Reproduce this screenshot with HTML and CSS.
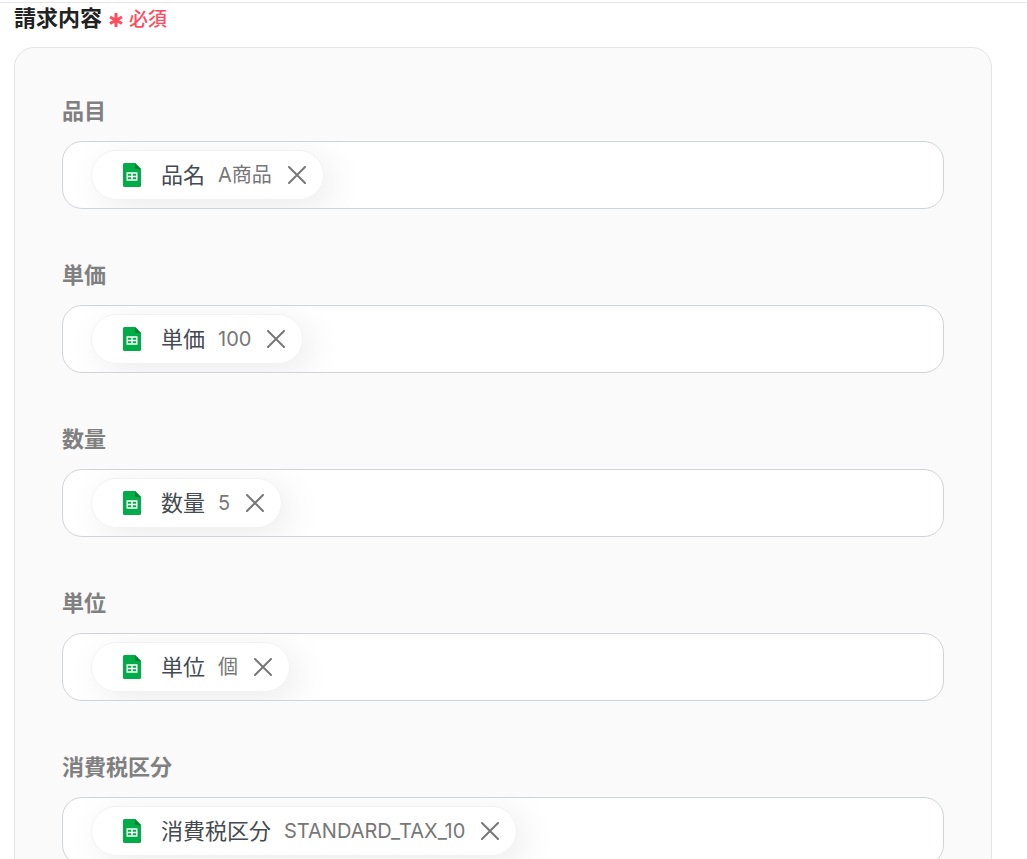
FILE: index.html
```
<!DOCTYPE html>
<html lang="ja">
<head>
    <meta charset="UTF-8">
    <meta name="viewport" content="width=device-width, initial-scale=1.0">
    <title>請求内容</title>
    <link rel="stylesheet" href="styles.css">
</head>
<body>

    <!-- Shared icons -->
    <svg class="sprite" aria-hidden="true">
        <symbol id="icon-sheet" viewBox="0 0 18 24">
            <path fill="#00ac47" d="M1.5 0H12l6 6v16.5a1.5 1.5 0 0 1-1.5 1.5h-15A1.5 1.5 0 0 1 0 22.5v-21A1.5 1.5 0 0 1 1.5 0z"/>
            <path fill="#00832d" d="M12 0l6 6h-4.5A1.5 1.5 0 0 1 12 4.5z"/>
            <path fill="#fff" fill-rule="evenodd" d="M3.5 9.3h11v8.4h-11zM4.9 10.7v2h3.4v-2zM9.700 10.7v2h3.400v-2zM4.900 14.200v2h3.400v-2zM9.700 14.200v2h3.400v-2z"/>
        </symbol>
        <symbol id="icon-close" viewBox="0 0 18 18">
            <path fill="none" stroke="currentColor" stroke-width="2" stroke-linecap="round" d="M1 1l16 16M17 1L1 17"/>
        </symbol>
    </svg>

    <main class="section">
        <div class="section-header">
            <h2>請求内容</h2>
            <span class="required">
                <svg viewBox="0 0 14 14" aria-hidden="true">
                    <path fill="none" stroke="currentColor" stroke-width="3" d="M7 0v14M1 4l12 6.500M13 4L1 10.500"/>
                </svg>
                必須
            </span>
        </div>

        <form class="panel">
            <div class="field">
                <label for="item">品目</label>
                <div class="input-box">
                    <span class="chip">
                        <svg class="chip-icon"><use href="#icon-sheet"/></svg>
                        <span class="chip-name">品名</span>
                        <span class="chip-value">A商品</span>
                        <button type="button" aria-label="削除"><svg><use href="#icon-close"/></svg></button>
                    </span>
                    <input type="text" id="item" name="item">
                </div>
            </div>

            <div class="field">
                <label for="price">単価</label>
                <div class="input-box">
                    <span class="chip">
                        <svg class="chip-icon"><use href="#icon-sheet"/></svg>
                        <span class="chip-name">単価</span>
                        <span class="chip-value">100</span>
                        <button type="button" aria-label="削除"><svg><use href="#icon-close"/></svg></button>
                    </span>
                    <input type="text" id="price" name="price">
                </div>
            </div>

            <div class="field">
                <label for="quantity">数量</label>
                <div class="input-box">
                    <span class="chip">
                        <svg class="chip-icon"><use href="#icon-sheet"/></svg>
                        <span class="chip-name">数量</span>
                        <span class="chip-value">5</span>
                        <button type="button" aria-label="削除"><svg><use href="#icon-close"/></svg></button>
                    </span>
                    <input type="text" id="quantity" name="quantity">
                </div>
            </div>

            <div class="field">
                <label for="unit">単位</label>
                <div class="input-box">
                    <span class="chip">
                        <svg class="chip-icon"><use href="#icon-sheet"/></svg>
                        <span class="chip-name">単位</span>
                        <span class="chip-value">個</span>
                        <button type="button" aria-label="削除"><svg><use href="#icon-close"/></svg></button>
                    </span>
                    <input type="text" id="unit" name="unit">
                </div>
            </div>

            <div class="field">
                <label for="tax">消費税区分</label>
                <div class="input-box">
                    <span class="chip">
                        <svg class="chip-icon"><use href="#icon-sheet"/></svg>
                        <span class="chip-name">消費税区分</span>
                        <span class="chip-value">STANDARD_TAX_10</span>
                        <button type="button" aria-label="削除"><svg><use href="#icon-close"/></svg></button>
                    </span>
                    <input type="text" id="tax" name="tax">
                </div>
            </div>
        </form>
    </main>

</body>
</html>
```
FILE: styles.css
```
* {
    box-sizing: border-box;
}
body {
    margin: 0;
    padding-top: 2px;
    background-color: #fff;
    font-family: Inter, "Noto Sans CJK JP", sans-serif;
    color: #222;
}
.sprite {
    display: none;
}
.section {
    border-top: 1px solid #e5e5e5;
    padding: 0 35px 0 14px;
}
.section-header {
    display: flex;
    align-items: flex-start;
    gap: 7px;
    height: 32px;
    margin-bottom: 12px;
}
.section-header h2 {
    margin: 0;
    font-size: 22px;
    font-weight: 700;
    line-height: 30px;
}
.required {
    display: flex;
    align-items: center;
    gap: 6px;
    font-size: 19px;
    font-weight: 500;
    line-height: 34px;
    color: #ff4b5f;
}
.required svg {
    width: 14px;
    height: 14px;
}
.panel {
    background-color: #fafafa;
    border: 1px solid #e5e5e5;
    border-radius: 20px;
    padding: 48px 47px 0;
}
.field {
    padding-bottom: 51px;
}
.field label {
    display: block;
    margin-bottom: 15px;
    font-size: 22px;
    font-weight: 700;
    line-height: 30px;
    color: #808080;
}
.input-box {
    display: flex;
    align-items: center;
    height: 68px;
    padding: 0 28px;
    background-color: #fff;
    border: 1px solid #d0d4d9;
    border-radius: 20px;
    overflow: hidden;
}
.input-box input {
    flex: 1;
    min-width: 0;
    border: none;
    outline: none;
    background: transparent;
    font: inherit;
    font-size: 22px;
}
.chip {
    display: flex;
    align-items: center;
    height: 50px;
    padding: 0 17px 0 31px;
    border: 1px solid #f2f2f2;
    border-radius: 25px;
    background-color: #fff;
    box-shadow: 8px 8px 36px rgba(0, 0, 0, 0.08);
    white-space: nowrap;
}
.chip-icon {
    width: 18px;
    height: 24px;
    margin-right: 20px;
}
.chip-name {
    margin-right: 13px;
    font-size: 22px;
    line-height: 32px;
    color: #444a50;
}
.chip-value {
    margin-right: 16px;
    font-size: 20px;
    line-height: 32px;
    color: #777;
}
.chip button {
    display: flex;
    padding: 0;
    border: none;
    background: none;
    color: #777;
    cursor: pointer;
}
.chip button svg {
    width: 18px;
    height: 18px;
}
```
